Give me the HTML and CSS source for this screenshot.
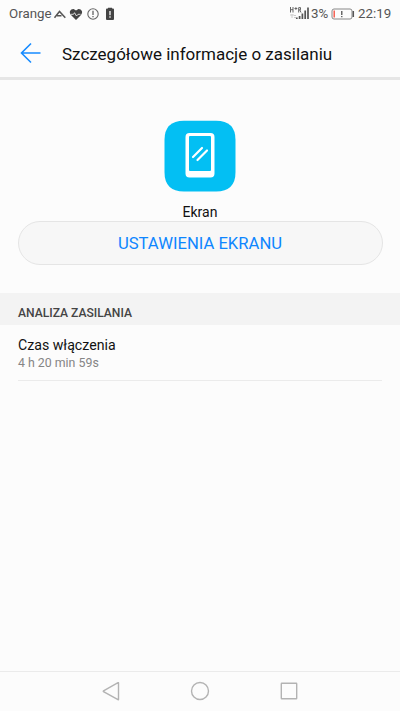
FILE: index.html
```html
<!DOCTYPE html>
<html lang="pl">
<head>
<meta charset="utf-8">
<title>Szczegółowe informacje o zasilaniu</title>
<link rel="stylesheet" href="styles.css">
</head>
<body>
<div class="status">
  <span class="carrier">Orange</span>
  <svg class="notices" width="62" height="16" viewBox="0 0 62 16">
    <path d="M1.500 11.800 6.500 5.500 12.300 11.800M4 9.800H8.500" fill="none" stroke="#555" stroke-width="1.500"/>
    <path d="M23 14 18 9C15.200 6 18 2.500 21 3.200L23 4.600 25 3.200C28 2.500 30.800 6 28 9Z" fill="#444"/>
    <path d="M18 8.300H20.500L21.500 6.700 23.500 10 25 8.300H27.500" fill="none" stroke="#fcfcfc" stroke-width=".8"/>
    <circle cx="40" cy="8" r="5.200" fill="none" stroke="#666" stroke-width="1.100"/>
    <path d="M40 4.800V8.900M40 10V11.200" stroke="#555" stroke-width="1.200"/>
    <path d="M55 2.500V1.700H59V2.500H60Q61 2.500 61 3.500V13Q61 14 60 14H54Q53 14 53 13V3.500Q53 2.500 54 2.500Z" fill="#444"/>
    <path d="M57 5V9.300M57 10.300V11.800" stroke="#fcfcfc" stroke-width="1.300"/>
  </svg>
  <svg class="signal" width="22" height="16" viewBox="0 0 22 16">
    <path d="M1.500 1V6.500M4 1V6.500M1.500 3.700H4M5.500 2.500H8.300M6.900 1.200V3.900M9.700 6.500V1.600H11.500V3.800H9.700M10.800 4 12 6.500" fill="none" stroke="#666" stroke-width="1"/>
    <path d="M1 9H5M3 8V12M5 9.500H7M5 11.500H7" stroke="#ccc" stroke-width="1"/>
    <path d="M7.800 11.500V13M10.600 10V13M13.400 7.500V13M16.200 4.500V13M19 1.500V13" stroke="#555" stroke-width="1.700"/>
  </svg>
  <span class="percent">3%</span>
  <svg class="battery" width="24" height="16" viewBox="0 0 24 16">
    <rect x="1" y="3" width="20" height="10" rx="2" fill="none" stroke="#888"/>
    <path d="M3.200 4.500V11.500" stroke="#f55345" stroke-width="1.400"/>
    <path d="M10.800 5V9M10.800 10V11.300" stroke="#444" stroke-width="1.200"/>
    <path d="M22.300 5V11" stroke="#555" stroke-width="1.500"/>
  </svg>
  <span class="clock">22:19</span>
</div>
<header class="header">
  <svg class="back" width="22" height="22" viewBox="0 0 22 22"><path d="M11 1.500 1.500 11 11 20.500M1.500 11H20.500" fill="none" stroke="#168bff" stroke-width="1.600"/></svg>
  <h1 class="title">Szczegółowe informacje o zasilaniu</h1>
</header>
<main class="content">
  <section class="app">
    <svg class="app-icon" width="72" height="72" viewBox="0 0 72 72">
      <path d="M20 .8H52Q71.500 .8 71.500 20V52Q71.500 71.500 52 71.500H20Q.5 71.500 .5 52V20Q.5 .8 20 .8Z" fill="#03bff3"/>
      <path fill-rule="evenodd" d="M25.500 13H46.500Q50.500 13 50.500 17V53.500Q50.500 57.500 46.500 57.500H25.500Q21.500 57.500 21.500 53.500V17Q21.500 13 25.500 13ZM26 16Q25 16 25 17V50Q25 51 26 51H46Q47 51 47 50V17Q47 16 46 16Z" fill="#fff"/>
      <path d="M29 37 38 28M33.500 40 43 30.500" stroke="#fff" stroke-width="2.200" stroke-linecap="round"/>
    </svg>
    <div class="app-name">Ekran</div>
    <button class="settings">USTAWIENIA EKRANU</button>
  </section>
  <h2 class="section-title">ANALIZA ZASILANIA</h2>
  <div class="row">
    <div class="row-title">Czas włączenia</div>
    <div class="row-value">4 h 20 min 59s</div>
  </div>
</main>
<nav class="nav">
  <svg width="20" height="20" viewBox="0 0 20 20"><path d="M17.500 2V18.500Q17.500 19 17 18.700L2.500 10.600Q2 10.200 2.500 9.900L17 1.700Q17.500 1.500 17.500 2Z"/></svg>
  <svg width="20" height="20" viewBox="0 0 20 20"><circle cx="10" cy="10" r="8.500"/></svg>
  <svg width="20" height="20" viewBox="0 0 20 20"><rect x="2.300" y="2.300" width="15.400" height="15.400" rx=".5"/></svg>
</nav>
</body>
</html>
```
FILE: styles.css
```css
* { box-sizing: border-box; }
body {
  margin: 0;
  height: 711px;
  display: flex;
  flex-direction: column;
  overflow: hidden;
  background: #fcfcfc;
  color: #111;
  font-family: Roboto, sans-serif;
}
svg { display: block; flex: none; }
.status {
  height: 28px;
  display: flex;
  align-items: center;
  padding: 0 8px 0 9px;
  color: #555;
  font-size: 13.3px;
  line-height: 28px;
  white-space: nowrap;
}
.carrier { width: 44px; }
.signal { margin-left: auto; }
.percent { width: 20px; }
.battery { margin-right: 3px; }
.clock { width: 34px; }
.header {
  height: 52px;
  display: flex;
  align-items: center;
  padding: 0 20px;
  border-bottom: 3px solid #e6e6e6;
}
.title {
  margin: 3px 0 0 20px;
  font-size: 17px;
  line-height: 24px;
  font-weight: 400;
  white-space: nowrap;
}
.content { flex: 1; }
.app {
  height: 213px;
  padding: 40px 17px 0;
  display: flex;
  flex-direction: column;
  align-items: center;
}
.app-name { margin-top: 12px; height: 17px; font-size: 14px; line-height: 17px; }
.settings {
  width: 365px;
  height: 44px;
  border: 1px solid #e5e5e5;
  border-radius: 22px;
  background: #f7f7f7;
  color: #0e86ff;
  font: 400 16.65px Roboto, sans-serif;
  flex: none;
}
.section-title {
  margin: 0;
  height: 32px;
  padding: 5px 18px 0;
  background: #f3f3f3;
  color: #444;
  font-size: 12.1px;
  line-height: 30px;
  font-weight: 500;
}
.row { height: 56px; margin: 0 18px; padding-top: 11px; border-bottom: 1px solid #ebebeb; }
.row-title { font-size: 14.15px; line-height: 18px; }
.row-value { margin-top: 1px; font-size: 12.35px; line-height: 17px; color: #858585; }
.nav {
  height: 40px;
  padding-bottom: 2px;
  border-top: 1px solid #ebebeb;
  display: flex;
  align-items: center;
  justify-content: center;
  gap: 69px;
}
.nav svg { fill: none; stroke: #b3b3b3; stroke-width: 1.400; }
```
